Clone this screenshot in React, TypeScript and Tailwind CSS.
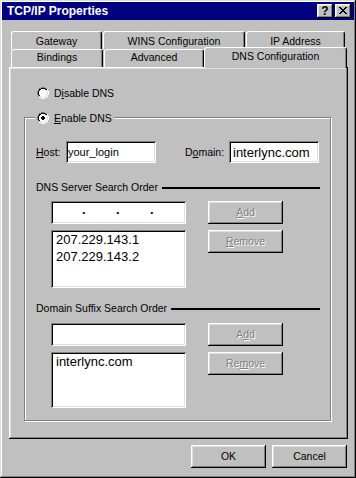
import React from "react";

const RAISED =
  "shadow-[inset_-1px_-1px_0_#000,inset_1px_1px_0_#fff,inset_-2px_-2px_0_#808080,inset_2px_2px_0_#dfdfdf]";
const SUNKEN =
  "shadow-[inset_1px_1px_0_#808080,inset_-1px_-1px_0_#fff,inset_2px_2px_0_#000,inset_-2px_-2px_0_#dfdfdf]";
const WINDOW =
  "shadow-[inset_-1px_-1px_0_#000,inset_1px_1px_0_#dfdfdf,inset_-2px_-2px_0_#808080,inset_2px_2px_0_#fff]";

function Pixels({ rows, colors }: { rows: string[]; colors: Record<string, string> }) {
  const w = rows[0].length;
  const h = rows.length;
  return (
    <svg
      width={w}
      height={h}
      viewBox={`0 0 ${w} ${h}`}
      shapeRendering="crispEdges"
      className="block shrink-0"
    >
      {rows.flatMap((r, y) =>
        r.split("").map((c, x) =>
          colors[c] ? (
            <rect key={`${x}-${y}`} x={x} y={y} width={1} height={1} fill={colors[c]} />
          ) : null
        )
      )}
    </svg>
  );
}

const RADIO_OFF = [
  "....GGGG....",
  "..GGKKKKGG..",
  ".GKKwwwwKKW.",
  ".GKwwwwwwLW.",
  "GKwwwwwwwwLW",
  "GKwwwwwwwwLW",
  "GKwwwwwwwwLW",
  "GKwwwwwwwwLW",
  ".GKwwwwwwLW.",
  ".GLLwwwwLLW.",
  "..WWLLLLWW..",
  "....WWWW....",
];
const RADIO_ON = [
  "....GGGG....",
  "..GGKKKKGG..",
  ".GKKwwwwKKW.",
  ".GKwwwwwwLW.",
  "GKwwwKKwwwLW",
  "GKwwKKKKwwLW",
  "GKwwKKKKwwLW",
  "GKwwwKKwwwLW",
  ".GKwwwwwwLW.",
  ".GLLwwwwLLW.",
  "..WWLLLLWW..",
  "....WWWW....",
];
const RADIO_COLORS = { G: "#808080", K: "#000000", w: "#ffffff", W: "#ffffff", L: "#dfdfdf" };

function Radio({ checked }: { checked?: boolean }) {
  return <Pixels rows={checked ? RADIO_ON : RADIO_OFF} colors={RADIO_COLORS} />;
}

const CLOSE = ["KK....KK", ".KK..KK.", "..KKKK..", "...KK...", "..KKKK..", ".KK..KK.", "KK....KK"];

function Btn({
  children,
  disabled,
  className = "",
}: {
  children: React.ReactNode;
  disabled?: boolean;
  className?: string;
}) {
  return (
    <div
      className={`${className} bg-[#c0c0c0] ${RAISED} flex items-center justify-center ${
        disabled ? "text-[#808080] [text-shadow:1px_1px_0_#fff]" : "text-black"
      }`}
    >
      <span>{children}</span>
    </div>
  );
}

function Tab({ label, className }: { label: string; className: string }) {
  return (
    <div
      className={`${className} flex justify-center bg-[#c0c0c0] border-l border-t border-r border-white border-r-black rounded-t-[3px] shadow-[inset_-1px_0_0_#808080]`}
    >
      <span>{label}</span>
    </div>
  );
}

function U({ children }: { children: React.ReactNode }) {
  return <span className="underline decoration-1 underline-offset-[1px]">{children}</span>;
}

function IPField() {
  return (
    <div className={`h-[23px] bg-white ${SUNKEN} flex items-center pl-[31px]`}>
      <span className="w-[34px] text-[13px] font-bold leading-[13px] mb-[6px]">.</span>
      <span className="w-[34px] text-[13px] font-bold leading-[13px] mb-[6px]">.</span>
      <span className="w-[34px] text-[13px] font-bold leading-[13px] mb-[6px]">.</span>
    </div>
  );
}

export default function App() {
  return (
    <div
      className={`w-[356px] h-[478px] bg-[#c0c0c0] p-[2px] flex flex-col text-black text-[10.5px] leading-[13px] [font-family:'Liberation_Sans',Arial,sans-serif] ${WINDOW}`}
    >
      {/* Title bar */}
      <div className="h-[18px] shrink-0 bg-[#000080] flex items-center justify-between pl-[5px] pr-[3px]">
        <span className="text-white font-bold text-[12px] leading-[14px]">TCP/IP Properties</span>
        <div className="flex gap-[2px]">
          <div
            className={`w-[16px] h-[14px] bg-[#c0c0c0] ${RAISED} flex items-center justify-center text-[12px] font-bold leading-none pb-[1px]`}
          >
            ?
          </div>
          <div className={`w-[16px] h-[14px] bg-[#c0c0c0] ${RAISED} flex items-start pl-[4px] pt-[3px]`}>
            <Pixels rows={CLOSE} colors={{ K: "#000000" }} />
          </div>
        </div>
      </div>

      {/* Tabs */}
      <div className="mt-[11px] ml-[9px] flex flex-col shrink-0">
        <div className="flex h-[18px] gap-[1px]">
          <Tab className="w-[91px] pt-[3px]" label="Gateway" />
          <Tab className="w-[142px] pt-[3px]" label="WINS Configuration" />
          <Tab className="w-[99px] pt-[3px]" label="IP Address" />
        </div>
        <div className="flex h-[18px]">
          <Tab className="w-[92px] pt-[1px]" label="Bindings" />
          <Tab className="w-[100px] ml-[1px] pt-[1px]" label="Advanced" />
          <Tab className="w-[143px] h-[21px] -mt-[2px] pt-[2px] relative z-10" label="DNS Configuration" />
        </div>
      </div>

      {/* Panel */}
      <div className={`ml-[7px] w-[339px] h-[372px] shrink-0 ${RAISED} pt-[20px] pl-[15px] flex flex-col`}>
        <div className="ml-[13px] flex items-center gap-[5px] h-[12px]">
          <Radio />
          <span>
            D<U>i</U>sable DNS
          </span>
        </div>

        <div className="relative mt-[18px] w-[307px] h-[304px] border border-[#808080] shadow-[inset_1px_1px_0_#fff,1px_1px_0_#fff] pt-[23px] pl-[11px] pr-[10px] flex flex-col">
          <div className="absolute -top-[6px] left-[10px] px-[2px] bg-[#c0c0c0] flex items-center gap-[5px] h-[12px]">
            <Radio checked />
            <span>
              <U>E</U>nable DNS
            </span>
          </div>

          <div className="flex items-center h-[22px]">
            <span className="w-[30px]">
              <U>H</U>ost:
            </span>
            <div className={`w-[90px] h-[22px] bg-white ${SUNKEN} flex items-center pl-[2px] text-[11px]`}>
              your_login
            </div>
            <span className="ml-[29px] w-[44px]">
              D<U>o</U>main:
            </span>
            <div className={`w-[90px] h-[22px] bg-white ${SUNKEN} flex items-center pl-[4px] text-[13px]`}>
              interlync.com
            </div>
          </div>

          <div className="mt-[18px] flex items-center h-[13px]">
            <span>DNS Server Search Order</span>
            <div className="flex-1 h-[2px] bg-black ml-[4px]" />
          </div>

          <div className="mt-[7px] ml-[15px] flex gap-[22px]">
            <div className="w-[135px] flex flex-col gap-[6px]">
              <IPField />
              <div className={`h-[58px] bg-white ${SUNKEN} pl-[5px] pt-[1px] text-[13px] leading-[17px]`}>
                <div>207.229.143.1</div>
                <div>207.229.143.2</div>
              </div>
            </div>
            <div className="w-[75px] flex flex-col gap-[6px]">
              <Btn disabled className="h-[23px]">
                <U>A</U>dd
              </Btn>
              <Btn disabled className="h-[23px]">
                <U>R</U>emove
              </Btn>
            </div>
          </div>

          <div className="mt-[14px] flex items-center h-[13px]">
            <span>Domain Suffix Search Order</span>
            <div className="flex-1 h-[2px] bg-black ml-[4px]" />
          </div>

          <div className="mt-[8px] ml-[15px] flex gap-[22px]">
            <div className="w-[135px] flex flex-col gap-[6px]">
              <div className={`h-[23px] bg-white ${SUNKEN}`} />
              <div className={`h-[56px] bg-white ${SUNKEN} pl-[5px] pt-[1px] text-[13px] leading-[17px]`}>
                <div>interlync.com</div>
              </div>
            </div>
            <div className="w-[75px] flex flex-col gap-[6px]">
              <Btn disabled className="h-[23px]">
                A<U>d</U>d
              </Btn>
              <Btn disabled className="h-[23px]">
                Re<U>m</U>ove
              </Btn>
            </div>
          </div>
        </div>
      </div>

      {/* Bottom buttons */}
      <div className="mt-[6px] flex justify-end gap-[6px] pr-[7px]">
        <Btn className="w-[75px] h-[23px]">OK</Btn>
        <Btn className="w-[75px] h-[23px]">Cancel</Btn>
      </div>
    </div>
  );
}
